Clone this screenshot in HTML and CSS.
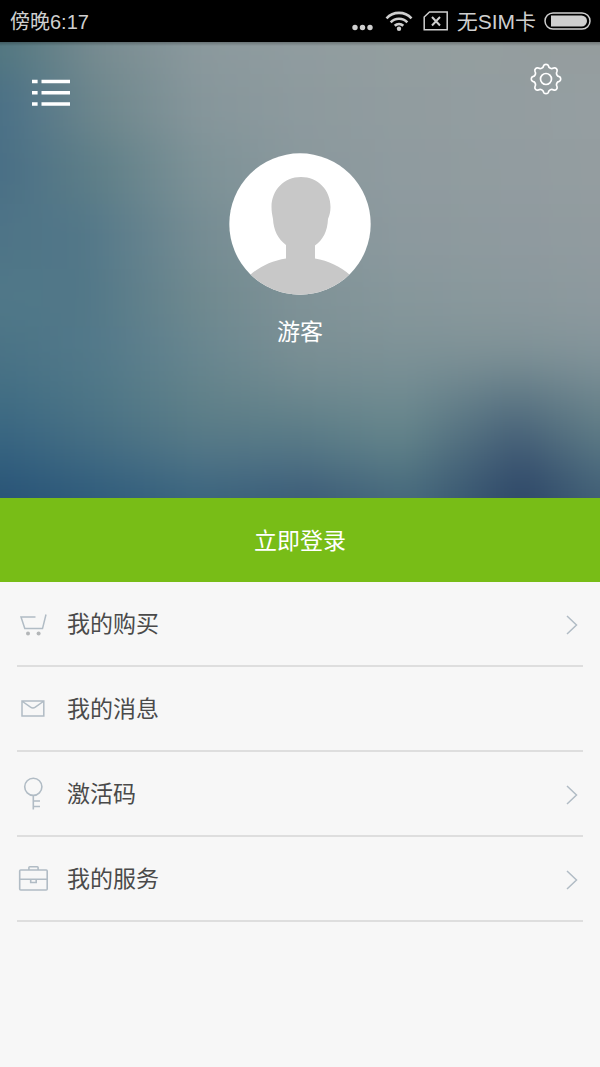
FILE: index.html
```html
<!DOCTYPE html>
<html lang="zh-CN">
<head>
<meta charset="utf-8">
<meta name="viewport" content="width=device-width, initial-scale=1">
<title>我的</title>
<link rel="stylesheet" href="styles.css">
</head>
<body>
<div class="status">
  <span class="status-time">傍晚6:17</span>
  <div class="status-icons">
    <svg class="dots" width="22" height="26" viewBox="0 0 22 26" fill="#cfcfcf"><circle cx="3" cy="19.500" r="2.700"/><circle cx="10.500" cy="19.500" r="2.700"/><circle cx="18" cy="19.500" r="2.700"/></svg>
    <svg class="wifi" width="28" height="22" viewBox="0 0 28 22" fill="none" stroke="#cfcfcf" stroke-width="2.600"><path d="M1.500 8.300a17.200 17.200 0 0 1 25 0M5.700 12.300a11.500 11.500 0 0 1 16.600 0M9.700 15.800a6.300 6.300 0 0 1 8.600 0"/><circle cx="14" cy="18.800" r="2.200" fill="#cfcfcf" stroke="none"/></svg>
    <svg class="sim" width="26" height="20" viewBox="0 0 26 20" fill="none" stroke="#cfcfcf"><path d="M6.500 1H24.200V18.800H1.200V6z" stroke-width="1.500"/><path d="M9 6l8 8.500M17 6l-8 8.500" stroke-width="2"/></svg>
    <span class="carrier">无SIM卡</span>
    <svg class="battery" width="47" height="18" viewBox="0 0 47 18"><rect x="1" y="1" width="45" height="16" rx="8" fill="none" stroke="#cfcfcf" stroke-width="1.500"/><path d="M7 3.500H37.500a5.500 5.500 0 0 1 0 11H7z" fill="#cfcfcf"/></svg>
  </div>
</div>

<main>
<section class="hero">
  <svg class="backdrop" viewBox="0 0 600 456" preserveAspectRatio="none" aria-hidden="true">
    <defs>
      <filter id="soft" filterUnits="userSpaceOnUse" x="-60" y="-80" width="720" height="620" color-interpolation-filters="sRGB"><feGaussianBlur stdDeviation="14 20"/></filter>
      <linearGradient id="r0" gradientUnits="userSpaceOnUse" x1="0" x2="600" y1="0" y2="0"><stop offset="0" stop-color="#527780"/><stop offset=".167" stop-color="#788c91"/><stop offset=".333" stop-color="#8b999d"/><stop offset=".5" stop-color="#909c9f"/><stop offset=".667" stop-color="#939e9f"/><stop offset="1" stop-color="#959d9e"/></linearGradient>
      <linearGradient id="r1" gradientUnits="userSpaceOnUse" x1="0" x2="600" y1="0" y2="0"><stop offset="0" stop-color="#4a7086"/><stop offset=".167" stop-color="#6e878d"/><stop offset=".333" stop-color="#86969b"/><stop offset=".5" stop-color="#8d9a9e"/><stop offset=".667" stop-color="#919c9f"/><stop offset="1" stop-color="#959ea1"/></linearGradient>
      <linearGradient id="r2" gradientUnits="userSpaceOnUse" x1="0" x2="600" y1="0" y2="0"><stop offset="0" stop-color="#496f86"/><stop offset=".167" stop-color="#5f7f88"/><stop offset=".333" stop-color="#7d9297"/><stop offset=".5" stop-color="#8a989d"/><stop offset=".667" stop-color="#8f9b9f"/><stop offset="1" stop-color="#949da0"/></linearGradient>
      <linearGradient id="r3" gradientUnits="userSpaceOnUse" x1="0" x2="600" y1="0" y2="0"><stop offset="0" stop-color="#4e7487"/><stop offset=".14" stop-color="#527788"/><stop offset=".333" stop-color="#758c93"/><stop offset=".5" stop-color="#84959a"/><stop offset=".667" stop-color="#8c999e"/><stop offset="1" stop-color="#919b9f"/></linearGradient>
      <linearGradient id="r4" gradientUnits="userSpaceOnUse" x1="0" x2="600" y1="0" y2="0"><stop offset="0" stop-color="#507888"/><stop offset=".14" stop-color="#517788"/><stop offset=".333" stop-color="#6f898f"/><stop offset=".5" stop-color="#7f9297"/><stop offset=".667" stop-color="#86979b"/><stop offset="1" stop-color="#8d999e"/></linearGradient>
      <linearGradient id="r5" gradientUnits="userSpaceOnUse" x1="0" x2="600" y1="0" y2="0"><stop offset="0" stop-color="#4a7386"/><stop offset=".167" stop-color="#53798a"/><stop offset=".333" stop-color="#688690"/><stop offset=".5" stop-color="#7a8f94"/><stop offset=".667" stop-color="#7e9297"/><stop offset=".85" stop-color="#7f9297"/><stop offset="1" stop-color="#83949a"/></linearGradient>
      <linearGradient id="r6" gradientUnits="userSpaceOnUse" x1="0" x2="600" y1="0" y2="0"><stop offset="0" stop-color="#426e84"/><stop offset=".167" stop-color="#4f7787"/><stop offset=".333" stop-color="#62828a"/><stop offset=".5" stop-color="#6d888f"/><stop offset=".667" stop-color="#728c92"/><stop offset=".86" stop-color="#627b87"/><stop offset="1" stop-color="#70878f"/></linearGradient>
      <linearGradient id="r7" gradientUnits="userSpaceOnUse" x1="0" x2="600" y1="0" y2="0"><stop offset="0" stop-color="#396682"/><stop offset=".167" stop-color="#487084"/><stop offset=".333" stop-color="#587b87"/><stop offset=".5" stop-color="#5b7c87"/><stop offset=".667" stop-color="#65858b"/><stop offset=".86" stop-color="#486379"/><stop offset="1" stop-color="#5e7b85"/></linearGradient>
      <linearGradient id="r8" gradientUnits="userSpaceOnUse" x1="0" x2="600" y1="0" y2="0"><stop offset="0" stop-color="#2f5c7c"/><stop offset=".167" stop-color="#3b6681"/><stop offset=".333" stop-color="#4a7085"/><stop offset=".5" stop-color="#4a6c82"/><stop offset=".667" stop-color="#547783"/><stop offset=".87" stop-color="#364f6e"/><stop offset="1" stop-color="#4c6b7e"/></linearGradient>
      <linearGradient id="r9" gradientUnits="userSpaceOnUse" x1="0" x2="600" y1="0" y2="0"><stop offset="0" stop-color="#285276"/><stop offset=".167" stop-color="#2f5b7b"/><stop offset=".333" stop-color="#39637d"/><stop offset=".52" stop-color="#3b5a76"/><stop offset=".68" stop-color="#45687c"/><stop offset=".87" stop-color="#2d4767"/><stop offset="1" stop-color="#405e75"/></linearGradient>
    </defs>
    <g filter="url(#soft)">
      <rect x="-60" y="-80" width="720" height="112" fill="url(#r0)"/>
      <rect x="-60" y="32" width="720" height="65" fill="url(#r1)"/>
      <rect x="-60" y="97" width="720" height="65" fill="url(#r2)"/>
      <rect x="-60" y="162" width="720" height="65" fill="url(#r3)"/>
      <rect x="-60" y="227" width="720" height="58" fill="url(#r4)"/>
      <rect x="-60" y="285" width="720" height="45" fill="url(#r5)"/>
      <rect x="-60" y="330" width="720" height="40" fill="url(#r6)"/>
      <rect x="-60" y="370" width="720" height="40" fill="url(#r7)"/>
      <rect x="-60" y="410" width="720" height="33" fill="url(#r8)"/>
      <rect x="-60" y="443" width="720" height="97" fill="url(#r9)"/>
    </g>
  </svg>
  <header class="hero-bar">
    <button class="icon-button menu" type="button" aria-label="菜单">
      <svg width="38" height="28" viewBox="0 0 38 28" fill="#fff"><path d="M0 .8h5.600v3.400H0zM9.500.8H38v3.400H9.500zM0 12h5.600v3.400H0zM9.500 12H38v3.400H9.500zM0 23.300h5.600v3.400H0zM9.500 23.300H38v3.400H9.500z"/></svg>
    </button>
    <button class="icon-button" type="button" aria-label="设置">
      <svg width="32" height="32" viewBox="-16 -16 32 32" fill="none" stroke="#fff" stroke-width="1.700" stroke-linejoin="round"><path d="M-2.400-13.200Q-2-14.700 0-14.700T2.400-13.200C2.800-10.800 5.600-9.700 7.600-11Q9.200-11.600 10.400-10.400T11-7.600C9.700-5.600 10.800-2.800 13.200-2.400Q14.700-2 14.700 0T13.200 2.400C10.800 2.800 9.700 5.600 11 7.600Q11.600 9.200 10.400 10.400T7.600 11C5.600 9.700 2.800 10.800 2.400 13.200Q2 14.700 0 14.700T-2.400 13.200C-2.800 10.800-5.600 9.700-7.600 11Q-9.200 11.600-10.400 10.400T-11 7.600C-9.700 5.600-10.800 2.800-13.200 2.400Q-14.700 2-14.700 0T-13.200-2.400C-10.800-2.800-9.700-5.600-11-7.600Q-11.600-9.200-10.400-10.400T-7.600-11C-5.600-9.700-2.800-10.800-2.400-13.200z"/><circle r="5.500"/></svg>
    </button>
  </header>
  <svg class="avatar" width="142" height="142" viewBox="0 0 142 142" role="img" aria-label="头像">
    <clipPath id="disc"><circle cx="71" cy="71" r="70.700"/></clipPath>
    <circle cx="71" cy="71" r="70.700" fill="#fff"/>
    <path clip-path="url(#disc)" fill="#c8c8c8" d="M72 24C89 24 101.500 37 101.500 54C101.500 59 100.500 62 99 66C98.500 78 94 87 86 92.500V105.500C99 107.500 112 114 121 122V142H21V122C30 114 43 107.500 57 105.500V92C49 86 44.500 77 44 66C43 61 42.500 58 42.500 54C42.500 37 55 24 72 24z"/>
  </svg>
  <p class="name">游客</p>
</section>

<button class="login" type="button">立即登录</button>

<nav>
  <ul class="list">
    <li><a class="row" href="#">
      <svg class="row-icon" width="34" height="34" viewBox="0 0 34 34" fill="none" stroke="#b1bcc5" stroke-width="1.500"><path d="M18.500 10H4L7.800 21.600H25.500L29 7.500"/><g fill="#b3b6b8" stroke="none"><circle cx="11" cy="26.600" r="2"/><circle cx="21.600" cy="26.600" r="2"/></g></svg>
      <span class="label">我的购买</span>
      <svg class="chevron" width="12" height="20" viewBox="0 0 12 20"><path d="M1 1l9.500 9-9.500 9"/></svg>
    </a></li>
    <li><a class="row" href="#">
      <svg class="row-icon" width="34" height="34" viewBox="0 0 34 34" fill="none" stroke="#b1bcc5" stroke-width="1.500"><path d="M5 9H26.800V24H5zM5.500 9.500L13.500 15.200Q15.900 16.800 18.300 15.200L26.300 9.500"/></svg>
      <span class="label">我的消息</span>
    </a></li>
    <li><a class="row" href="#">
      <svg class="row-icon" width="34" height="34" viewBox="0 0 34 34" fill="none" stroke="#b1bcc5" stroke-width="1.600"><circle cx="16.300" cy="9.800" r="8.600"/><path d="M16.300 18.400V32.500M16.300 24H23M16.300 29.500H23"/></svg>
      <span class="label">激活码</span>
      <svg class="chevron" width="12" height="20" viewBox="0 0 12 20"><path d="M1 1l9.500 9-9.500 9"/></svg>
    </a></li>
    <li><a class="row" href="#">
      <svg class="row-icon" width="34" height="34" viewBox="0 0 34 34" fill="none" stroke="#b1bcc5" stroke-width="1.600"><rect x="2.700" y="8" width="27.500" height="20" rx="1"/><path d="M11.900 8V5.600Q11.900 4.700 12.800 4.700H20.200Q21.100 4.700 21.100 5.600V8M2.700 17.200H30.200M13.700 17.200V20.500H19.200V17.200"/></svg>
      <span class="label">我的服务</span>
      <svg class="chevron" width="12" height="20" viewBox="0 0 12 20"><path d="M1 1l9.500 9-9.500 9"/></svg>
    </a></li>
  </ul>
</nav>
</main>
</body>
</html>
```
FILE: styles.css
```css
* {
  box-sizing: border-box;
}

body {
  margin: 0;
  min-height: 100vh;
  background: #f7f7f7;
  color: #4a4a4a;
  font-family: "Liberation Sans", "Noto Sans CJK SC", sans-serif;
  font-size: 23px;
}

svg {
  display: block;
  flex: none;
}

button {
  border: 0;
  font: inherit;
  color: inherit;
  cursor: pointer;
}

.status {
  display: flex;
  align-items: center;
  justify-content: space-between;
  height: 42px;
  padding: 0 9px 0 10px;
  background: #000;
  color: #cfcfcf;
  font-size: 20px;
}

.status-time,
.carrier {
  padding-bottom: 2px;
}

.carrier {
  font-size: 21px;
}

.status-icons {
  display: flex;
  align-items: center;
}

.dots {
  margin-right: 11px;
}

.wifi {
  margin-right: 10px;
}

.sim {
  margin-right: 8px;
}

.battery {
  margin-left: 8px;
}

.hero {
  position: relative;
  display: flex;
  flex-direction: column;
  align-items: center;
  min-height: 456px;
  padding-top: 21px;
  background: #6f8990;
  color: #fff;
}

.backdrop {
  position: absolute;
  inset: 0;
  width: 100%;
  height: 100%;
}

.hero::after {
  content: "";
  position: absolute;
  inset: 0 0 auto;
  height: 4px;
  background: linear-gradient(rgba(0, 0, 0, 0.25), rgba(0, 0, 0, 0));
}

.hero-bar,
.avatar,
.name {
  position: relative;
}

.hero-bar {
  display: flex;
  align-items: flex-start;
  justify-content: space-between;
  width: 100%;
  padding: 0 38px 0 32px;
}

.icon-button {
  padding: 0;
  background: none;
}

.menu {
  padding: 16px 0;
}

.avatar {
  margin-top: 30px;
}

.name {
  margin: 20px 0 0;
  line-height: 34px;
}

.login {
  display: block;
  width: 100%;
  padding: 26px 0 24px;
  background: #78bd17;
  color: #fff;
  line-height: 34px;
}

.list {
  margin: 0;
  padding: 0 17px;
  list-style: none;
}

.row {
  display: flex;
  align-items: center;
  height: 85px;
  border-bottom: 2px solid #dedede;
  color: inherit;
  text-decoration: none;
}

.row-icon {
  margin-right: 16px;
}

.label {
  flex: 1;
  padding-bottom: 3px;
}

.chevron {
  margin: 2px 5px 0 0;
  fill: none;
  stroke: #b1bcc5;
  stroke-width: 1.5px;
}
```
